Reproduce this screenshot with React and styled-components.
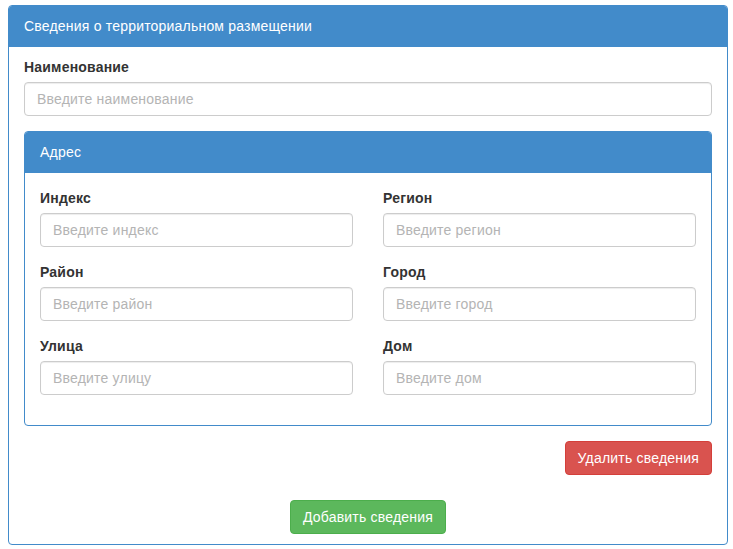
import React from "react";
import styled, { createGlobalStyle } from "styled-components";

const GlobalStyle = createGlobalStyle`
  * {
    box-sizing: border-box;
  }
  body {
    margin: 0;
    background: #ffffff;
    font-family: "Liberation Sans", Arial, sans-serif;
    font-size: 14px;
    line-height: 20px;
    letter-spacing: 0.2px;
    color: #333333;
  }
`;

const Page = styled.div`
  padding: 5px 5px 4px 8px;
`;

const Panel = styled.div`
  border: 1px solid #428bca;
  border-radius: 4px;
  background: #ffffff;
  margin-bottom: ${(props) => (props.nested ? "15px" : "0")};
`;

const PanelHeading = styled.div`
  background: #428bca;
  color: #ffffff;
  padding: 10px 15px;
  border-bottom: 1px solid #428bca;
  border-radius: 3px 3px 0 0;
  font-size: 14px;
  line-height: 20px;
`;

const PanelBody = styled.div`
  padding: ${(props) => (props.nested ? "15px" : "10px 15px")};
`;

const FormGroup = styled.div`
  margin-bottom: 15px;
`;

const Label = styled.label`
  display: block;
  margin-bottom: 5px;
  font-weight: bold;
  color: #333333;
`;

const Input = styled.input`
  display: block;
  width: 100%;
  height: 34px;
  padding: 6px 12px;
  font-family: "Liberation Sans", Arial, sans-serif;
  font-size: 14px;
  line-height: 20px;
  letter-spacing: 0.2px;
  color: #555555;
  border: 1px solid #cccccc;
  border-radius: 4px;
  box-shadow: inset 0 1px 1px rgba(0, 0, 0, 0.075);
  outline: none;

  &::placeholder {
    color: #b4b4b4;
  }
`;

const Grid = styled.div`
  display: grid;
  grid-template-columns: 1fr 1fr;
  column-gap: 30px;
`;

const Actions = styled.div`
  display: flex;
  justify-content: ${(props) => props.align};
  margin-bottom: ${(props) => props.gap || "0"};
`;

const Button = styled.button`
  height: 34px;
  padding: 6px 12px;
  font-family: "Liberation Sans", Arial, sans-serif;
  font-size: 14px;
  line-height: 20px;
  letter-spacing: 0.2px;
  color: #ffffff;
  border: 1px solid ${(props) => (props.variant === "danger" ? "#d43f3a" : "#4cae4c")};
  background: ${(props) => (props.variant === "danger" ? "#d9534f" : "#5cb85c")};
  border-radius: 4px;
  cursor: pointer;
`;

const addressFields = [
  ["Индекс", "Введите индекс"],
  ["Регион", "Введите регион"],
  ["Район", "Введите район"],
  ["Город", "Введите город"],
  ["Улица", "Введите улицу"],
  ["Дом", "Введите дом"],
];

function Field({ label, placeholder }) {
  return (
    <FormGroup>
      <Label>{label}</Label>
      <Input type="text" placeholder={placeholder} />
    </FormGroup>
  );
}

export default function App() {
  return (
    <>
      <GlobalStyle />
      <Page>
        <Panel>
          <PanelHeading>Сведения о территориальном размещении</PanelHeading>
          <PanelBody>
            <Field label="Наименование" placeholder="Введите наименование" />
            <Panel nested>
              <PanelHeading>Адрес</PanelHeading>
              <PanelBody nested>
                <Grid>
                  {addressFields.map(([label, placeholder]) => (
                    <Field key={label} label={label} placeholder={placeholder} />
                  ))}
                </Grid>
              </PanelBody>
            </Panel>
            <Actions align="flex-end" gap="25px">
              <Button variant="danger">Удалить сведения</Button>
            </Actions>
            <Actions align="center">
              <Button variant="success">Добавить сведения</Button>
            </Actions>
          </PanelBody>
        </Panel>
      </Page>
    </>
  );
}
